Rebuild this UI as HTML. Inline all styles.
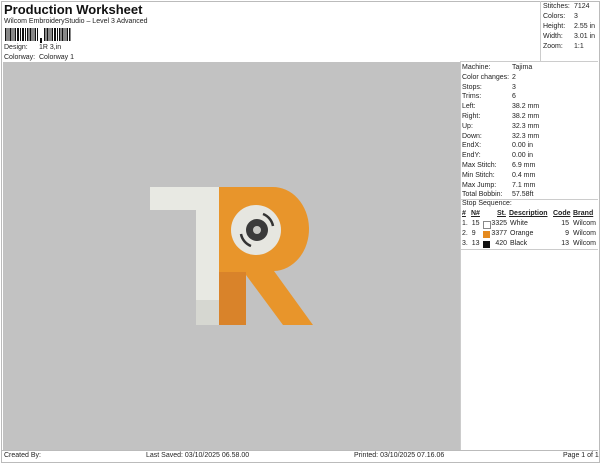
<!DOCTYPE html>
<html><head><style>
body{margin:0;width:600px;height:464px;background:#fff;font-family:"Liberation Sans",sans-serif;font-size:7px;color:#222;position:relative;overflow:hidden}
.a{position:absolute;white-space:nowrap}
.frame{position:absolute;border:1px solid #bbb}
</style></head><body>
<div class="frame" style="left:1px;top:1px;width:597px;height:460px"></div>
<div class="a" style="left:4px;top:2px;font-size:13px;font-weight:bold;color:#111">Production Worksheet</div>
<div class="a" style="left:4px;top:18px;font-size:7px">Wilcom EmbroideryStudio – Level 3 Advanced</div>
<svg class="a" style="left:5px;top:28px" width="70" height="16">
<g fill="#111">
<rect x="0" y="0" width="1.5" height="13"/><rect x="2.5" y="0" width="1" height="13"/><rect x="4.5" y="0" width="2" height="13"/><rect x="7.5" y="0" width="1" height="13"/><rect x="9.5" y="0" width="1.5" height="13"/><rect x="12" y="0" width="2" height="13"/><rect x="15" y="0" width="1" height="13"/><rect x="17" y="0" width="2" height="13"/><rect x="20" y="0" width="1" height="13"/><rect x="22" y="0" width="1.5" height="13"/><rect x="24.5" y="0" width="2" height="13"/><rect x="27.5" y="0" width="1" height="13"/><rect x="29.5" y="0" width="1.5" height="13"/><rect x="32" y="0" width="1" height="13"/><rect x="35" y="10" width="2" height="5"/><rect x="39" y="0" width="1.5" height="13"/><rect x="41.5" y="0" width="2" height="13"/><rect x="44.5" y="0" width="1" height="13"/><rect x="46.5" y="0" width="1.5" height="13"/><rect x="49" y="0" width="2" height="13"/><rect x="52" y="0" width="1" height="13"/><rect x="54" y="0" width="1.5" height="13"/><rect x="56.5" y="0" width="2" height="13"/><rect x="59.5" y="0" width="1" height="13"/><rect x="61.5" y="0" width="1.5" height="13"/><rect x="64" y="0" width="1.5" height="13"/>
</g></svg>
<div class="a" style="left:4px;top:44px">Design:</div><div class="a" style="left:39px;top:44px">1R 3,in</div>
<div class="a" style="left:4px;top:54px">Colorway:</div><div class="a" style="left:39px;top:54px">Colorway 1</div>
<div class="a" style="left:3px;top:62px;width:457px;height:388px;background:#c2c2c2"></div>
<div class="a" style="left:540px;top:1px;height:61px;border-left:1px solid #ccc"></div>
<div class="a" style="left:460px;top:61px;width:138px;border-top:1px solid #ccc"></div>
<div class="a" style="left:460px;top:62px;height:388px;border-left:1px solid #ccc"></div>
<div class="a" style="left:543px;top:2px;line-height:10px">Stitches:<br>Colors:<br>Height:<br>Width:<br>Zoom:</div>
<div class="a" style="left:574px;top:2px;line-height:10px">7124<br>3<br>2.55 in<br>3.01 in<br>1:1</div>
<div class="a" style="left:462px;top:63px;line-height:9.8px">Machine:<br>Color changes:<br>Stops:<br>Trims:<br>Left:<br>Right:<br>Up:<br>Down:<br>EndX:<br>EndY:<br>Max Stitch:<br>Min Stitch:<br>Max Jump:<br>Total Bobbin:</div>
<div class="a" style="left:512px;top:63px;line-height:9.8px">Tajima<br>2<br>3<br>6<br>38.2 mm<br>38.2 mm<br>32.3 mm<br>32.3 mm<br>0.00 in<br>0.00 in<br>6.9 mm<br>0.4 mm<br>7.1 mm<br>57.58ft</div>
<div class="a" style="left:460px;top:199px;width:138px;border-top:1px solid #ccc"></div>
<div class="a" style="left:462px;top:200px">Stop Sequence:</div>
<div class="a" style="left:462px;top:209px;line-height:10px;font-weight:bold;text-decoration:underline">#</div>
<div class="a" style="left:471px;top:209px;line-height:10px;font-weight:bold;text-decoration:underline">N#</div>
<div class="a" style="left:497px;top:209px;line-height:10px;font-weight:bold;text-decoration:underline">St.</div>
<div class="a" style="left:509px;top:209px;line-height:10px;font-weight:bold;text-decoration:underline">Description</div>
<div class="a" style="left:553px;top:209px;line-height:10px;font-weight:bold;text-decoration:underline">Code</div>
<div class="a" style="left:573px;top:209px;line-height:10px;font-weight:bold;text-decoration:underline">Brand</div>
<div class="a" style="left:462px;top:219px;line-height:10px">1.&nbsp; 15<br>2.&nbsp; 9<br>3.&nbsp; 13</div>
<div class="a" style="left:483px;top:221px;width:6px;height:6px;border:1px solid #888;background:#fff"></div>
<div class="a" style="left:483px;top:231px;width:7px;height:7px;background:#e58a1f"></div>
<div class="a" style="left:483px;top:241px;width:7px;height:7px;background:#111"></div>
<div class="a" style="left:491px;top:219px;line-height:10px;width:16px;text-align:right">3325<br>3377<br>420</div>
<div class="a" style="left:510px;top:219px;line-height:10px">White<br>Orange<br>Black</div>
<div class="a" style="left:552px;top:219px;line-height:10px;width:17px;text-align:right">15<br>9<br>13</div>
<div class="a" style="left:573px;top:219px;line-height:10px">Wilcom<br>Wilcom<br>Wilcom</div>
<div class="a" style="left:460px;top:249px;width:138px;border-top:1px solid #ccc"></div>
<div class="a" style="left:1px;top:450px;width:597px;border-top:1px solid #bbb"></div>
<div class="a" style="left:4px;top:452px">Created By:</div>
<div class="a" style="left:146px;top:452px">Last Saved: 03/10/2025 06.58.00</div>
<div class="a" style="left:354px;top:452px">Printed: 03/10/2025 07.16.06</div>
<div class="a" style="left:563px;top:452px">Page 1 of 1</div>
<svg class="a" style="left:0;top:0" width="600" height="464">
<path d="M150 187H222V325H196V210H150Z" fill="#e8e9e3"/>
<path d="M196 300H222V325H196Z" fill="#d6d7d1"/>
<path d="M219 187H272A36 42 0 0 1 274 271L313 325H283L246 275V325H219Z" fill="#e8952b"/>
<path d="M219 272H246V325H219Z" fill="#d9832a"/>
<circle cx="256" cy="230" r="25" fill="#e6e6e0"/>
<circle cx="257" cy="230" r="11" fill="#3a3a3a"/>
<circle cx="257" cy="230" r="4" fill="#c8c8c4"/>
<path d="M263 214A16 16 0 0 1 273 226" stroke="#333" stroke-width="2.5" fill="none"/>
<path d="M241 234A16 16 0 0 0 251 246" stroke="#333" stroke-width="2.5" fill="none"/>
</svg>
</body></html>
